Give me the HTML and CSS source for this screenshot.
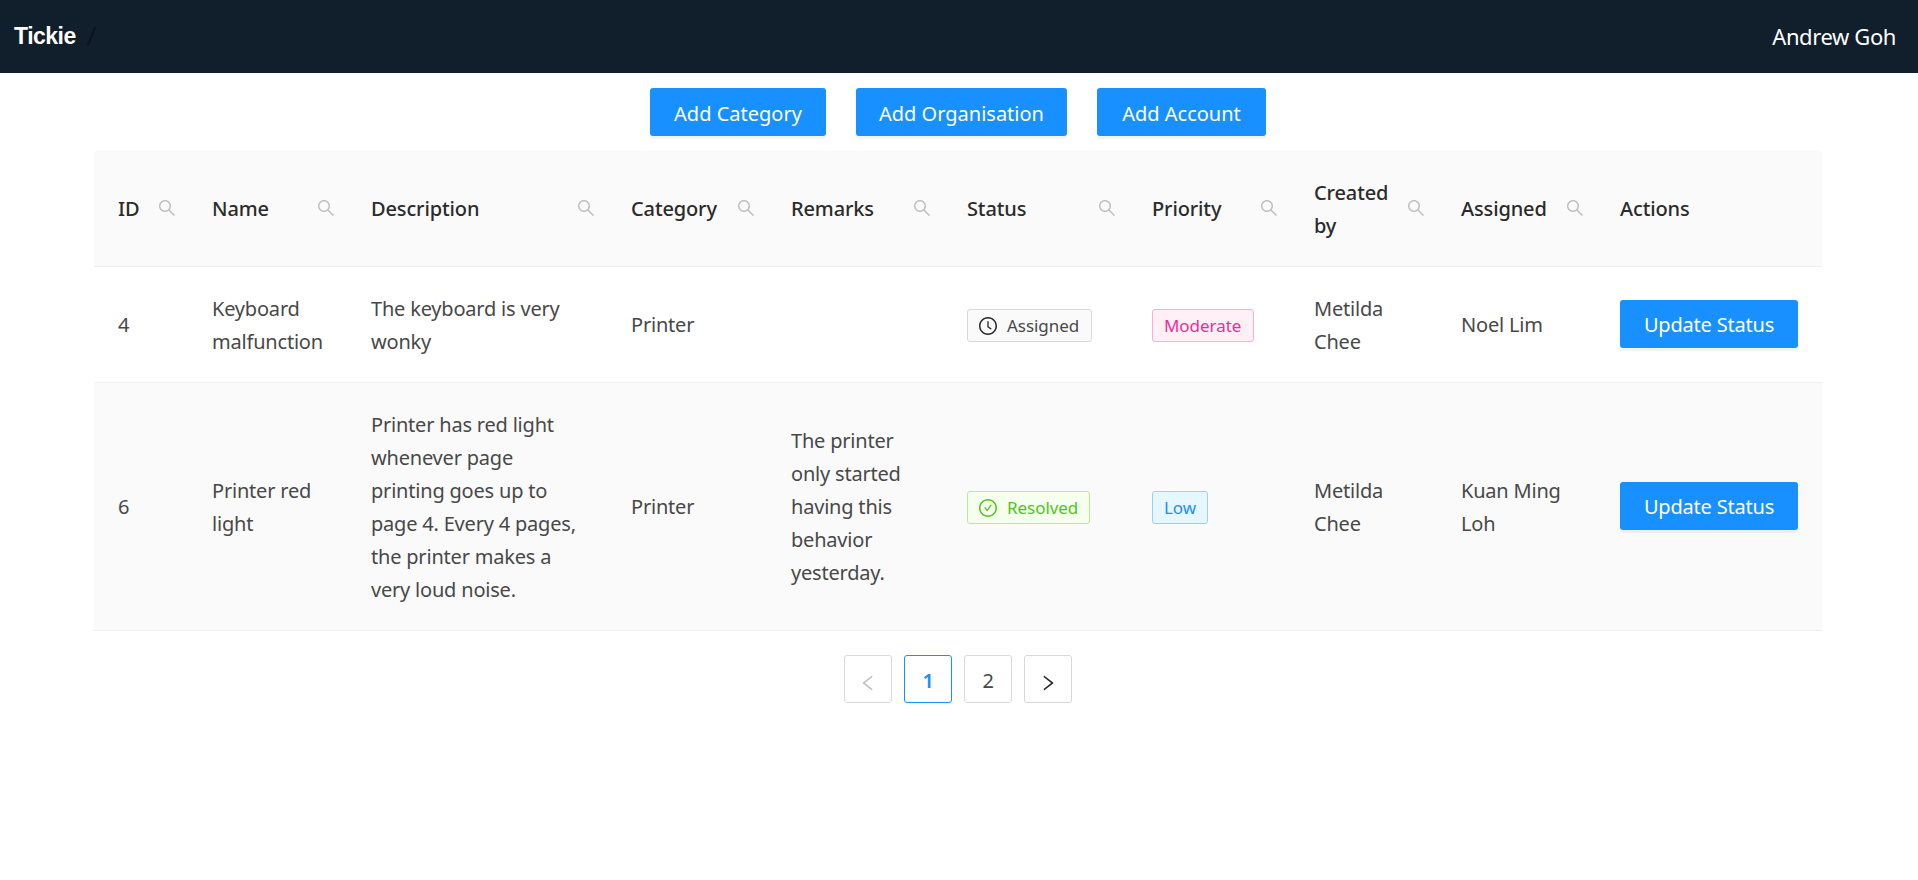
FILE: index.html
```html
<!DOCTYPE html>
<html lang="en">
<head>
<meta charset="utf-8">
<title>Tickie</title>
<link rel="stylesheet" href="styles.css">
</head>
<body>
<svg class="sprite" aria-hidden="true">
  <symbol id="search" viewBox="64 64 896 896"><path d="M909.6 854.5L649.9 594.8C690.2 542.7 712 479 712 412c0-80.2-31.3-155.4-87.9-212.1-56.6-56.7-132-87.9-212.1-87.9s-155.5 31.3-212.1 87.9C143.2 256.5 112 331.8 112 412c0 80.1 31.3 155.5 87.9 212.1C256.5 680.8 331.8 712 412 712c67 0 130.6-21.8 182.7-62l259.7 259.6a8.2 8.2 0 0011.6 0l43.6-43.5a8.2 8.2 0 000-11.6zM570.4 570.4C528 612.7 471.8 636 412 636s-116-23.3-158.4-65.6C211.3 528 188 471.8 188 412s23.3-116.1 65.6-158.4C296 211.3 352.2 188 412 188s116.1 23.2 158.4 65.6S636 352.2 636 412s-23.3 116.1-65.6 158.4z"/></symbol>
  <symbol id="clock" viewBox="64 64 896 896"><path d="M512 64C264.6 64 64 264.6 64 512s200.6 448 448 448 448-200.6 448-448S759.4 64 512 64zm0 820c-205.4 0-372-166.6-372-372s166.6-372 372-372 372 166.600 372 372-166.600 372-372 372z"/><path d="M686.700 638.600L544.100 535.500V288c0-4.400-3.600-8-8-8H488c-4.400 0-8 3.600-8 8v275.400c0 2.600 1.200 5 3.300 6.500l165.400 120.600c3.600 2.600 8.600 1.800 11.200-1.700l28.600-39c2.600-3.700 1.800-8.700-1.800-11.200z"/></symbol>
  <symbol id="check" viewBox="64 64 896 896"><path d="M699 353h-46.900c-10.200 0-19.900 4.900-25.900 13.300L469 584.300l-71.200-98.800c-6-8.300-15.600-13.300-25.900-13.300H325c-6.500 0-10.300 7.400-6.500 12.700l124.600 172.800a31.800 31.800 0 0051.700 0l210.600-292c3.900-5.300.1-12.700-6.400-12.700z"/><path d="M512 64C264.6 64 64 264.6 64 512s200.6 448 448 448 448-200.6 448-448S759.4 64 512 64zm0 820c-205.4 0-372-166.6-372-372s166.6-372 372-372 372 166.600 372 372-166.600 372-372 372z"/></symbol>
  <symbol id="left" viewBox="64 64 896 896"><path d="M724 218.300V141c0-6.700-7.700-10.400-12.900-6.300L260.300 486.800a31.860 31.860 0 000 50.300l450.800 352.100c5.300 4.100 12.900.4 12.900-6.300v-77.300c0-4.900-2.300-9.600-6.100-12.600l-360-281 360-281.100c3.800-3 6.100-7.700 6.100-12.600z"/></symbol>
  <symbol id="right" viewBox="64 64 896 896"><path d="M765.700 486.800L314.900 134.700A7.970 7.970 0 00302 141v77.300c0 4.900 2.300 9.600 6.100 12.600l360 281.100-360 281.100c-3.900 3-6.100 7.700-6.100 12.600V883c0 6.700 7.700 10.400 12.900 6.300l450.800-352.100a31.960 31.960 0 000-50.400z"/></symbol>
</svg>

<header class="topbar">
  <div class="crumbs"><a class="brand">Tickie</a><span class="slash">/</span></div>
  <span class="user">Andrew Goh</span>
</header>

<main>
  <div class="actions">
    <button class="btn btn-category">Add Category</button>
    <button class="btn btn-organisation">Add Organisation</button>
    <button class="btn btn-account">Add Account</button>
  </div>

  <table class="tickets">
    <colgroup>
      <col class="c-id"><col class="c-name"><col class="c-desc"><col class="c-cat"><col class="c-rem">
      <col class="c-status"><col class="c-prio"><col class="c-created"><col class="c-assigned"><col class="c-actions">
    </colgroup>
    <thead>
      <tr>
        <th><div class="head"><span>ID</span><svg class="icon"><use href="#search"/></svg></div></th>
        <th><div class="head"><span>Name</span><svg class="icon"><use href="#search"/></svg></div></th>
        <th><div class="head"><span>Description</span><svg class="icon"><use href="#search"/></svg></div></th>
        <th><div class="head"><span>Category</span><svg class="icon"><use href="#search"/></svg></div></th>
        <th><div class="head"><span>Remarks</span><svg class="icon"><use href="#search"/></svg></div></th>
        <th><div class="head"><span>Status</span><svg class="icon"><use href="#search"/></svg></div></th>
        <th><div class="head"><span>Priority</span><svg class="icon"><use href="#search"/></svg></div></th>
        <th><div class="head"><span>Created<br>by</span><svg class="icon"><use href="#search"/></svg></div></th>
        <th><div class="head"><span>Assigned</span><svg class="icon"><use href="#search"/></svg></div></th>
        <th><div class="head"><span>Actions</span></div></th>
      </tr>
    </thead>
    <tbody>
      <tr class="row-short">
        <td>4</td>
        <td>Keyboard<br>malfunction</td>
        <td>The keyboard is very<br>wonky</td>
        <td>Printer</td>
        <td></td>
        <td><span class="tag tag-assigned"><svg class="icon"><use href="#clock"/></svg>Assigned</span></td>
        <td><span class="tag tag-moderate">Moderate</span></td>
        <td>Metilda<br>Chee</td>
        <td>Noel Lim</td>
        <td><button class="btn btn-update">Update Status</button></td>
      </tr>
      <tr class="row-tall">
        <td>6</td>
        <td>Printer red<br>light</td>
        <td>Printer has red light<br>whenever page<br>printing goes up to<br>page 4. Every 4 pages,<br>the printer makes a<br>very loud noise.</td>
        <td>Printer</td>
        <td>The printer<br>only started<br>having this<br>behavior<br>yesterday.</td>
        <td><span class="tag tag-resolved"><svg class="icon"><use href="#check"/></svg>Resolved</span></td>
        <td><span class="tag tag-low">Low</span></td>
        <td>Metilda<br>Chee</td>
        <td>Kuan Ming<br>Loh</td>
        <td><button class="btn btn-update">Update Status</button></td>
      </tr>
    </tbody>
  </table>

  <nav class="pages">
    <a class="page disabled"><svg class="icon"><use href="#left"/></svg></a>
    <a class="page active">1</a>
    <a class="page">2</a>
    <a class="page"><svg class="icon"><use href="#right"/></svg></a>
  </nav>
</main>
</body>
</html>
```
FILE: styles.css
```css
* { box-sizing: border-box; }

body {
  margin: 0;
  background: #fff;
  color: #484848;
  font: 400 20px/33px "Noto Sans", "Open Sans", sans-serif;
  letter-spacing: -0.2px;
}

.sprite { display: none; }
.icon { display: block; flex: none; width: 18px; height: 18px; fill: currentColor; }

.topbar {
  display: flex;
  justify-content: space-between;
  align-items: center;
  height: 73px;
  padding: 0 22px 0 14px;
  background: #111e2b;
}
.crumbs { display: flex; align-items: center; gap: 12px; padding-bottom: 1px; font-family: "Liberation Sans", Arial, sans-serif; font-size: 23px; }
.brand { color: #fff; font-weight: 700; letter-spacing: -0.5px; }
.slash { color: #0a121a; font-size: 25px; transform: skewX(-7deg); }
.user { color: #fff; font-size: 22px; letter-spacing: -0.4px; }

.actions { display: flex; justify-content: center; gap: 30px; padding: 15px 2px 15px 0; }

.btn {
  display: block;
  height: 48px;
  padding: 2px 0 0;
  border: 0;
  border-radius: 3px;
  background: #1890ff;
  box-shadow: 0 3px 0 rgba(0, 0, 0, 0.045);
  color: #fff;
  font: inherit;
  letter-spacing: 0;
  text-align: center;
  white-space: nowrap;
}
.btn-category { width: 176px; }
.btn-organisation { width: 211px; }
.btn-account { width: 169px; }
.btn-update { width: 178px; margin-bottom: 2px; letter-spacing: -0.2px; }

.tickets {
  width: 1728px;
  margin-left: 94px;
  table-layout: fixed;
  border-collapse: separate;
  border-spacing: 0;
}
.c-id { width: 94px; }
.c-name { width: 159px; }
.c-desc { width: 260px; }
.c-cat { width: 160px; }
.c-rem { width: 176px; }
.c-status { width: 185px; }
.c-prio { width: 162px; }
.c-created { width: 147px; }
.c-assigned { width: 159px; }
.c-actions { width: 226px; }

th, td {
  padding: 0 0 0 24px;
  border-bottom: 1px solid #f0f0f0;
  text-align: left;
  vertical-align: middle;
  white-space: nowrap;
}
th { height: 116px; background: #fafafa; color: #2b2b2b; font-weight: 500; letter-spacing: -0.13px; }
th:first-child { border-top-left-radius: 3px; }
th:last-child { border-top-right-radius: 3px; }
.head { display: flex; justify-content: space-between; align-items: center; padding-right: 12px; }
.head .icon { margin-bottom: 2px; color: #bfbfbf; }
.row-short td { height: 116px; }
.row-tall td { height: 248px; background: #fafafa; }

.tag {
  display: flex;
  align-items: center;
  gap: 10px;
  width: max-content;
  height: 33px;
  margin-top: 2px;
  padding: 0 11px;
  border: 1px solid #d9d9d9;
  border-radius: 3px;
  background: #fafafa;
  font-size: 17px;
  letter-spacing: -0.05px;
}
.tag-assigned { width: 125px; }
.tag-assigned .icon { color: #262626; }
.tag-moderate { width: 102px; color: #eb2f96; background: #fff0f6; border-color: #ffadd2; }
.tag-resolved { width: 123px; color: #52c41a; background: #f6ffed; border-color: #b7eb8f; }
.tag-low { width: 56px; color: #1890ff; background: #e6f7ff; border-color: #91d5ff; }

.pages { display: flex; justify-content: center; gap: 12px; padding: 24px 2px 0 0; }
.page {
  display: flex;
  justify-content: center;
  align-items: center;
  width: 48px;
  height: 48px;
  padding-top: 2px;
  border: 1px solid #d9d9d9;
  border-radius: 3px;
}
.page .icon { margin-top: 5px; color: #262626; }
.page.disabled .icon { color: #bfbfbf; }
.page.active { border-color: #1890ff; color: #1890ff; font-weight: 600; }
```
